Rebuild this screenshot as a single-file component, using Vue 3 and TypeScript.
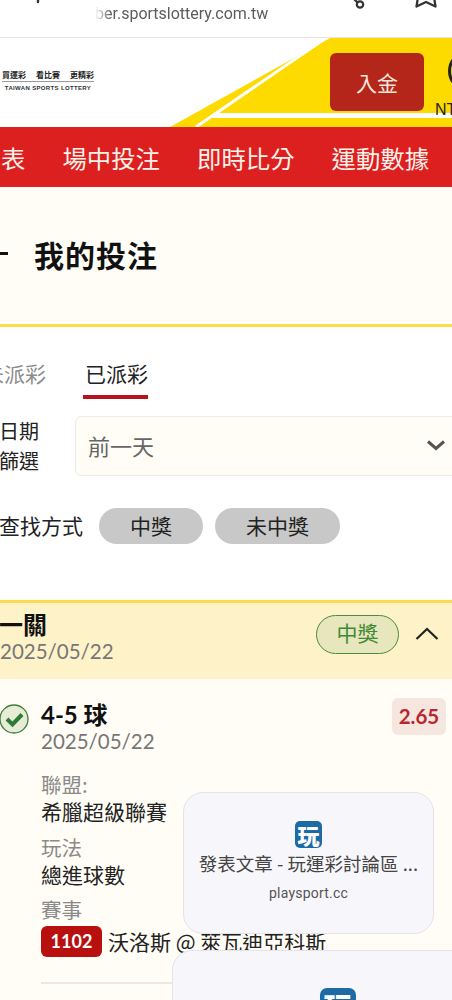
<template>
  <div class="page">
    <div class="browser-bar">
      <svg class="back-mark" width="8" height="6" viewBox="0 0 8 6"><path d="M4 -4V2" stroke="#333" stroke-width="2.4" stroke-linecap="round" fill="none" /></svg>
      <span class="url">ber.sportslottery.com.tw</span>
      <svg class="share" width="18" height="12" viewBox="0 0 18 12">
        <circle cx="10" cy="4.5" r="3.2" fill="none" stroke="#333" stroke-width="2.2" />
        <path d="M7.5 2.5 2 -3" stroke="#333" stroke-width="2.2" fill="none" />
      </svg>
      <svg class="star" width="24" height="8" viewBox="0 0 24 8">
        <path d="M4.5 -6 2.5 6.5 12 2 21.5 6.5 19.5 -6" fill="none" stroke="#333" stroke-width="2.3" stroke-linejoin="round" />
      </svg>
    </div>

    <header class="site-header">
      <svg class="wedge" width="452" height="89" viewBox="0 0 452 89">
        <path d="M170 89 330 0H452V89Z" fill="#fedb00" />
        <path d="M196 89 326 0" stroke="#fff" stroke-width="3" fill="none" />
        <path d="M213 77.5H452" stroke="#fff" stroke-width="5" fill="none" />
      </svg>
      <div class="logo">
        <div class="slogan"><span>買運彩</span><span>看比賽</span><span>更精彩</span></div>
        <div class="logo-en">TAIWAN SPORTS LOTTERY</div>
      </div>
      <button class="deposit">入金</button>
      <div class="balance">
        <span class="ring"></span>
        <span class="nt">NT</span>
      </div>
    </header>

    <nav class="main-nav">
      <span v-for="item in navItems" :key="item">{{ item }}</span>
    </nav>

    <section class="title-block">
      <span class="dash"></span>
      <h1>我的投注</h1>
    </section>

    <div class="tabs">
      <span class="tab">未派彩</span>
      <span class="tab active">已派彩</span>
    </div>

    <div class="filter-row">
      <label class="date-label">日期<br />篩選</label>
      <div class="select">
        <span>前一天</span>
        <svg width="20" height="12" viewBox="0 0 20 12"><path d="M2 2.5 10 9.5 18 2.5" fill="none" stroke="#555" stroke-width="3" /></svg>
      </div>
    </div>

    <div class="search-row">
      <span class="search-label">查找方式</span>
      <button class="pill win">中獎</button>
      <button class="pill lose">未中獎</button>
    </div>

    <section class="bet-head">
      <div class="bet-head-text">
        <strong>一關</strong>
        <span class="date">2025/05/22</span>
      </div>
      <span class="result">中獎</span>
      <svg class="caret" width="26" height="16" viewBox="0 0 26 16"><path d="M2.5 14 13 4 23.5 14" fill="none" stroke="#222" stroke-width="2.2" /></svg>
    </section>

    <section class="bet-body">
      <div class="pick-row">
        <svg class="check" width="30" height="30" viewBox="0 0 30 30">
          <circle cx="14" cy="15" r="14" fill="#e6ecd6" stroke="#3f7d3a" stroke-width="1.3" />
          <path d="M7 15 12.5 20.5 22 10.5" fill="none" stroke="#2f7a34" stroke-width="4" />
        </svg>
        <div class="pick-text">
          <div class="pick-name">4-5 球</div>
          <div class="date">2025/05/22</div>
        </div>
        <span class="odds">2.65</span>
      </div>

      <dl class="details">
        <div v-for="row in details" :key="row.label" class="detail">
          <dt>{{ row.label }}</dt>
          <dd>{{ row.value }}</dd>
        </div>
        <div class="detail">
          <dt>賽事</dt>
          <dd class="match"><span class="match-no">1102</span>沃洛斯 @ 萊瓦迪亞科斯</dd>
        </div>
      </dl>
      <div class="divider"></div>
    </section>

    <div class="link-card first">
      <span class="site-icon">玩</span>
      <div class="card-title">發表文章 - 玩運彩討論區 ...</div>
      <div class="card-host">playsport.cc</div>
    </div>
    <div class="link-card second">
      <span class="site-icon big">玩</span>
    </div>
  </div>
</template>

<script setup lang="ts">
const navItems = ["表", "場中投注", "即時比分", "運動數據"];

const details = [
  { label: "聯盟:", value: "希臘超級聯賽" },
  { label: "玩法", value: "總進球數" }
];
</script>

<style>
html, body {
  margin: 0;
  background: #fff;
}
</style>

<style scoped>
.page {
  position: relative;
  width: 452px;
  height: 1000px;
  overflow: hidden;
  background: #fff;
  color: #222;
  font-family: "Noto Sans CJK TC", "Noto Sans", sans-serif;
}

.browser-bar {
  display: flex;
  height: 38px;
  box-sizing: border-box;
  border-bottom: 1px solid #e4e4e4;
  align-items: flex-start;
}

.back-mark {
  margin-left: 34px;
}

.url {
  margin-left: 53px;
  width: 178px;
  margin-top: 3px;
  font: 16px/22px Roboto, sans-serif;
  color: #5c5c5c;
  white-space: nowrap;
  -webkit-mask-image: linear-gradient(90deg, transparent 0, #000 16px);
  mask-image: linear-gradient(90deg, transparent 0, #000 16px);
}

.share {
  margin-left: 77px;
}

.star {
  margin-left: 46px;
}

.site-header {
  position: relative;
  display: flex;
  height: 89px;
  align-items: flex-start;
  overflow: hidden;
}

.wedge {
  position: absolute;
  top: 0;
  left: 0;
}

.logo {
  position: relative;
  flex: none;
  margin: 32px 0 0 2px;
  width: 92px;
}

.slogan {
  display: flex;
  justify-content: space-between;
  padding-bottom: 1px;
  border-bottom: 1px solid #999;
  font-size: 8px;
  line-height: 10px;
  font-weight: 700;
  color: #222;
}

.logo-en {
  margin-top: 2px;
  font: 700 6px/8px "Liberation Sans", sans-serif;
  letter-spacing: 0.35px;
  text-align: center;
  white-space: nowrap;
  color: #333;
}

.deposit {
  position: relative;
  flex: none;
  width: 94px;
  height: 58px;
  margin: 15px 0 0 236px;
  border: 0;
  border-radius: 6px;
  background: #b5261a;
  color: #f8e6dc;
  font-family: inherit;
  font-size: 21px;
}

.balance {
  position: relative;
  flex: none;
  width: 30px;
  margin-left: 11px;
}

.ring {
  display: block;
  width: 30px;
  height: 36px;
  margin: 15px 0 0 13px;
  box-sizing: border-box;
  border: 3px solid #222;
  border-radius: 50%;
}

.nt {
  display: block;
  margin-top: 12px;
  font: 16px/18px "Liberation Sans", sans-serif;
  color: #222;
}

.main-nav {
  display: flex;
  gap: 37px;
  height: 60px;
  align-items: center;
  background: #dc1f1f;
  color: #fdf1ea;
  font-size: 24.4px;
  white-space: nowrap;
}

.main-nav span:first-child {
  margin-left: 1px;
}

.title-block {
  display: flex;
  align-items: center;
  box-sizing: border-box;
  height: 140px;
  padding-bottom: 4px;
  border-bottom: 3px solid #fbdb4d;
  background: #fffdf6;
}

.dash {
  width: 8px;
  height: 3px;
  margin-right: 26px;
  background: #111;
}

h1 {
  margin: 0;
  font-size: 30px;
  line-height: 40px;
  font-weight: 700;
  letter-spacing: 1px;
  color: #111;
}

.tabs {
  display: flex;
  gap: 36px;
  height: 72px;
  margin-left: -18px;
  font-size: 21px;
  white-space: nowrap;
}

.tab {
  height: 47px;
  margin-top: 20px;
  padding: 0 1px;
  line-height: 53px;
  color: #8c8c8c;
  box-sizing: border-box;
}

.tab.active {
  width: 65px;
  height: 52px;
  padding: 0 0 0 2px;
  border-bottom: 4px solid #b5141f;
  color: #222;
}

.filter-row {
  display: flex;
  align-items: center;
  height: 60px;
  margin-top: 17px;
}

.date-label {
  width: 75px;
  flex: none;
  font-size: 20px;
  line-height: 30px;
  margin-left: -1px;
}

.select {
  display: flex;
  align-items: center;
  justify-content: space-between;
  box-sizing: border-box;
  flex: none;
  width: 385px;
  height: 60px;
  margin-left: 1px;
  padding: 0 13px 2px 12px;
  border: 1px solid #ecebe6;
  border-radius: 6px;
  background: #fffdf6;
  font-size: 22px;
  color: #666;
}

.search-row {
  display: flex;
  align-items: center;
  height: 36px;
  margin-top: 32px;
}

.search-label {
  width: 100px;
  margin: -2px 0 0 -1px;
  flex: none;
  font-size: 21px;
  white-space: nowrap;
}

.pill {
  height: 36px;
  padding: 0 0 2px;
  border: 0;
  border-radius: 18px;
  background: #c8c8c8;
  color: #222;
  font-family: inherit;
  font-size: 21px;
}

.win {
  width: 104px;
}

.lose {
  width: 125px;
  margin-left: 12px;
}

.bet-head {
  display: flex;
  align-items: center;
  height: 76px;
  margin-top: 56px;
  border-top: 3px solid #fbdb4d;
  background: #fdf2c8;
}

.bet-head-text {
  display: flex;
  flex-direction: column;
  width: 316px;
  flex: none;
  margin-top: -8px;
}

.bet-head-text strong {
  margin-left: -1px;
  font-size: 24px;
  line-height: 28px;
  color: #111;
  font-weight: 700;
}

.date {
  font: 20.5px/26px Lato, sans-serif;
  color: #777;
}

.result {
  box-sizing: border-box;
  width: 83px;
  height: 39px;
  margin-top: -13px;
  border: 1px solid #4c8a3f;
  border-radius: 20px;
  background: #e8e6bd;
  color: #3f8a36;
  font-size: 21px;
  line-height: 33px;
  text-align: center;
}

.caret {
  margin: -17px 0 0 15px;
}

.bet-body {
  background: #fffdf6;
  height: 321px;
  padding-top: 19px;
  box-sizing: border-box;
}

.pick-row {
  display: flex;
  align-items: flex-start;
}

.check {
  flex: none;
  margin: 6px 0 0 0;
}

.pick-text {
  width: 351px;
  margin: 3px 0 0 11px;
  flex: none;
}

.pick-name {
  font: 700 24px/27px Lato, "Noto Sans CJK TC", sans-serif;
  color: #111;
}

.odds {
  width: 54px;
  height: 37px;
  border-radius: 6px;
  background: #f6e6e0;
  color: #b7282e;
  font: 700 20.5px/37px Lato, sans-serif;
  text-align: center;
  flex: none;
}

.details {
  margin: 16px 0 0 41px;
}

.detail {
  margin-bottom: 8.5px;
}

.detail dt {
  font-size: 20.5px;
  line-height: 29px;
  color: #8a8a8a;
}

.detail dd {
  margin: 0;
  font-size: 21px;
  line-height: 25px;
}

.detail dd.match {
  display: flex;
  align-items: center;
  margin-top: 2px;
  line-height: 31px;
  white-space: nowrap;
}

.match-no {
  width: 61px;
  height: 31px;
  margin-right: 6px;
  border-radius: 6px;
  background: #b80f0f;
  color: #fff;
  font: 700 18px/31px Lato, sans-serif;
  text-align: center;
}

.divider {
  height: 2px;
  margin: 25px 0 0 41px;
  background: #e9e8e2;
}

.link-card {
  position: absolute;
  display: flex;
  flex-direction: column;
  align-items: center;
  box-sizing: border-box;
  border: 1px solid #e3e3e8;
  border-radius: 20px;
  background: #f7f7fb;
}

.first {
  left: 183px;
  top: 792px;
  width: 251px;
  height: 142px;
  padding-top: 28px;
}

.second {
  left: 172px;
  top: 950px;
  width: 300px;
  height: 120px;
  padding: 37px 0 0 32px;
}

.site-icon {
  width: 27px;
  height: 27px;
  border-radius: 5px;
  background: #1d6aa5;
  color: #fff;
  font-size: 22px;
  font-weight: 900;
  line-height: 27px;
  text-align: center;
}

.site-icon.big {
  width: 36px;
  height: 36px;
  font-size: 29px;
  line-height: 36px;
  border-radius: 7px;
}

.card-title {
  margin-top: 2px;
  font-size: 18.5px;
  line-height: 26px;
  color: #444;
  white-space: nowrap;
}

.card-host {
  margin-top: 8px;
  font: 14px/18px Roboto, sans-serif;
  color: #555;
  letter-spacing: 0.2px;
}
</style>
